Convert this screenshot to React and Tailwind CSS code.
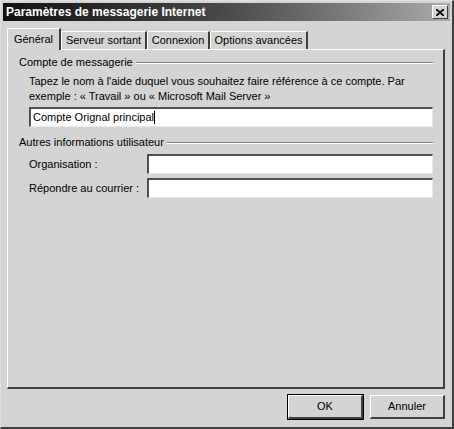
import React from 'react';

const font = { fontFamily: '"Liberation Sans", Arial, sans-serif' };

const Tab = ({ label, active, w }) => (
  <div
    className={
      (active
        ? 'relative z-10 -mb-[1px] h-[22px] pt-[4px] '
        : 'h-[18px] pt-[2px] ') +
      w +
      ' flex justify-center bg-[#d4d4d4] border-l border-t border-white border-r-2 border-r-[#404040] text-[11px] leading-[13px] text-black rounded-tl-[2px]'
    }
  >
    {label}
  </div>
);

const Group = ({ title }) => (
  <div className="flex items-center gap-[3px] h-[13px] text-[11px] leading-[13px] text-black">
    <span className="whitespace-nowrap">{title}</span>
    <div className="flex-1 flex flex-col">
      <div className="h-px bg-[#808080]" />
      <div className="h-px bg-white" />
    </div>
  </div>
);

const Field = ({ value }) => (
  <div className="h-[20px] bg-white border-t-2 border-l-2 border-t-[#505050] border-l-[#505050] border-r border-b border-r-[#e8e8e8] border-b-[#e8e8e8] flex items-center px-[2px] text-[11px] text-black">
    {value}
    {value && <span className="w-px h-[13px] bg-black" />}
  </div>
);

const Button = ({ label, primary }) => (
  <div
    className={
      'w-[75px] h-[24px] flex items-center justify-center text-[11px] text-black bg-[#d4d4d4] border-t border-l border-white border-r-2 border-b-2 border-r-[#404040] border-b-[#404040] ' +
      (primary ? 'outline outline-1 outline-black' : '')
    }
  >
    {label}
  </div>
);

export default function App() {
  return (
    <div
      className="w-[454px] h-[429px] bg-[#d4d4d4] border-t border-l border-t-[#e0e0e0] border-l-[#e0e0e0] border-r-2 border-b-2 border-r-[#404040] border-b-[#404040] flex flex-col overflow-hidden"
      style={font}
    >
      <div className="mx-[2px] mt-[2px] h-[18px] flex items-center justify-between pl-[3px] pr-[2px] bg-gradient-to-r from-[#121212] via-[#4a4a4a] to-[#ababab]">
        <span className="text-white font-bold text-[12px]">Paramètres de messagerie Internet</span>
        <div className="w-[16px] h-[14px] bg-[#d4d4d4] border-t border-l border-white border-r border-b border-r-[#404040] border-b-[#404040] flex items-center justify-center">
          <svg width="8" height="7" viewBox="0 0 8 7">
            <path d="M0 0 L8 7 M8 0 L0 7" stroke="#000" strokeWidth="1.8" />
          </svg>
        </div>
      </div>

      <div className="flex-1 flex flex-col pl-[6px] pr-[6px] pt-[7px]">
        <div className="flex items-end">
          <Tab label="Général" active w="w-[54px]" />
          <Tab label="Serveur sortant" w="w-[86px]" />
          <Tab label="Connexion" w="w-[63px]" />
          <Tab label="Options avancées" w="w-[98px]" />
        </div>
        <div className="h-[340px] mr-[1px] border-t border-l border-white border-r-2 border-b-2 border-r-[#404040] border-b-[#404040] pl-[11px] pr-[10px] pt-[6px] flex flex-col">
          <Group title="Compte de messagerie" />
          <div className="pl-[10px] pt-[5px] text-[11px] leading-[15px] text-black">
            <p>Tapez le nom à l'aide duquel vous souhaitez faire référence à ce compte. Par exemple : « Travail » ou « Microsoft Mail Server »</p>
            <div className="mt-[3px]">
              <Field value="Compte Orignal principal" />
            </div>
          </div>
          <div className="mt-[9px]">
            <Group title="Autres informations utilisateur" />
          </div>
          <div className="pl-[10px] pt-[5px] flex flex-col gap-[4px]">
            <div className="flex items-center">
              <span className="w-[118px] whitespace-nowrap text-[11px] text-black">Organisation :</span>
              <div className="flex-1"><Field /></div>
            </div>
            <div className="flex items-center">
              <span className="w-[118px] whitespace-nowrap text-[11px] text-black">Répondre au courrier :</span>
              <div className="flex-1"><Field /></div>
            </div>
          </div>
        </div>
        <div className="flex justify-end gap-[7px] mt-[6px] mr-[1px]">
          <Button label="OK" primary />
          <Button label="Annuler" />
        </div>
      </div>
    </div>
  );
}
